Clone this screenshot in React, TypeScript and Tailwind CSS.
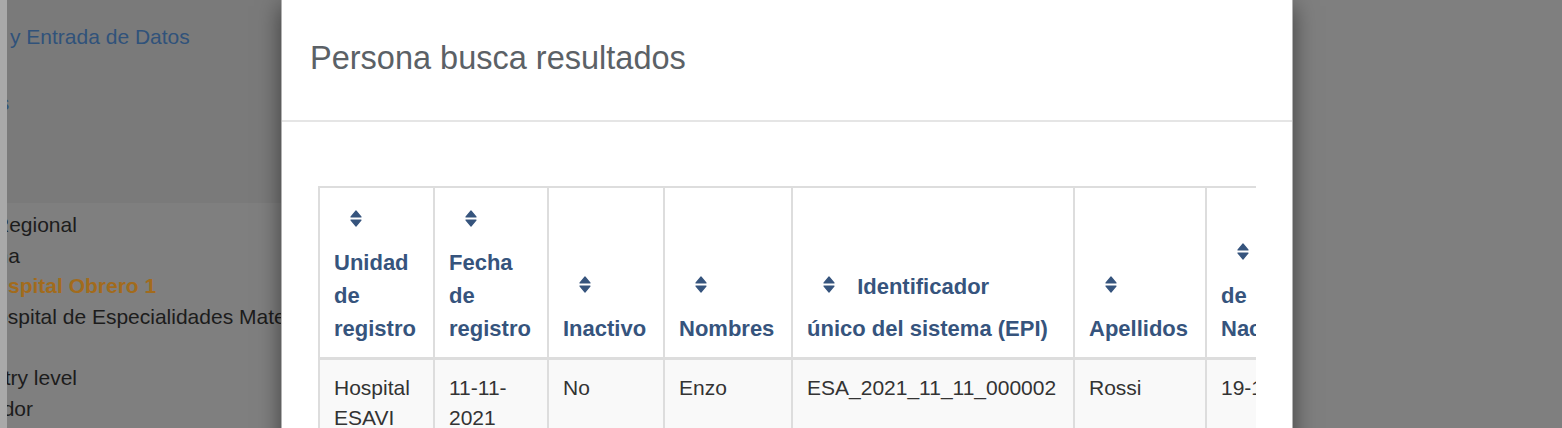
import { FC } from 'react';

const SortIcon: FC = () => (
  <svg width="12" height="17" viewBox="0 0 12 17" className="block">
    <path d="M6 1 L11 7 H1 Z" fill="currentColor" stroke="currentColor" strokeWidth="1.2" strokeLinejoin="round" />
    <path d="M1 10 H11 L6 16 Z" fill="currentColor" stroke="currentColor" strokeWidth="1.2" strokeLinejoin="round" />
  </svg>
);

interface IColumn {
  label: string;
  width: string;
  pad: string;
  value: string;
}

const columns: IColumn[] = [
  { label: 'Unidad de registro', width: 'w-[115px]', pad: 'pr-[16px]', value: 'Hospital ESAVI' },
  { label: 'Fecha de registro', width: 'w-[114px]', pad: 'pr-[16px]', value: '11-11-2021' },
  { label: 'Inactivo', width: 'w-[116px]', pad: 'pr-[16px]', value: 'No' },
  { label: 'Nombres', width: 'w-[128px]', pad: 'pr-[16px]', value: 'Enzo' },
  { label: 'Identificador único del sistema (EPI)', width: 'w-[282px]', pad: 'pr-[22px]', value: 'ESA_2021_11_11_000002' },
  { label: 'Apellidos', width: 'w-[132px]', pad: 'pr-[16px]', value: 'Rossi' },
  { label: 'Fecha de Nacimiento', width: 'w-[153px]', pad: 'pr-[16px]', value: '19-10-1990' },
];

const ResultsTable: FC = () => (
  <div className="w-full overflow-hidden">
    <table className="w-[1042px] table-fixed border-separate border-spacing-0 border-l-2 border-t-2 border-[#dddddd]">
      <thead>
        <tr>
          {columns.map(col => (
            <th
              key={col.label}
              className={`${col.width} ${col.pad} border-r-2 border-b-[3px] border-[#dddddd] pt-[16px] pb-[12px] pl-[14px] text-left align-bottom text-[22px] leading-[33px] font-bold text-[#36547d]`}
            >
              <span className="inline-block h-[42px] align-top pt-[6px] ml-[16px] mr-[16px]">
                <SortIcon />
              </span>{' '}
              {col.label}
            </th>
          ))}
        </tr>
      </thead>
      <tbody>
        <tr className="bg-[#f9f9f9]">
          {columns.map(col => (
            <td
              key={col.label}
              className="border-r-2 border-b-2 border-[#dddddd] pt-[13px] pb-[12px] pl-[14px] pr-[16px] align-top text-[21px] leading-[30px] text-[#333333]"
            >
              {col.value}
            </td>
          ))}
        </tr>
      </tbody>
    </table>
  </div>
);

export default function App() {
  return (
    <div className="flex h-[428px] w-[1562px] overflow-hidden font-['Liberation_Sans',Arial,sans-serif]">
      <div className="w-[7px] shrink-0 bg-[#a9a9a9]" />

      <div className="relative flex-1 overflow-hidden bg-[#7f7f7f]">
        {/* page behind the backdrop */}
        <div className="w-[274px] overflow-hidden whitespace-nowrap">
          <div className="h-[203px] bg-[#7a7a7a] text-[21px] leading-[30px] text-[#30527a]">
            <div className="pt-[22px] pl-[3px]">y Entrada de Datos</div>
            <div className="mt-[36px] ml-[-83px]">Reportes</div>
          </div>
          <div className="pt-[7px] text-[21px] leading-[30.5px] text-[#1c1c1c]">
            <div className="ml-[-13px]">Regional</div>
            <div className="ml-[-35px]">Zona</div>
            <div className="ml-[-27px] font-bold text-[#a26b1c]">Hospital Obrero 1</div>
            <div className="ml-[-26px]">Hospital de Especialidades Materno Infantil</div>
            <div className="h-[31px]" />
            <div className="ml-[-28px]">Entry level</div>
            <div className="ml-[-58px]">Digitador</div>
          </div>
        </div>

        {/* modal */}
        <div className="absolute left-[274px] top-[-1px] w-[1012px] h-[460px] border border-black/30 bg-white shadow-[0_7px_22px_rgba(0,0,0,0.5)]">
          <div className="h-[122px] border-b-2 border-[#e5e5e5] pt-[40px] pl-[28px]">
            <h4 className="text-[32.5px] leading-[37px] font-normal text-[#5b6166]">Persona busca resultados</h4>
          </div>
          <div className="pt-[64px] px-[36px]">
            <ResultsTable />
          </div>
        </div>
      </div>
    </div>
  );
}
